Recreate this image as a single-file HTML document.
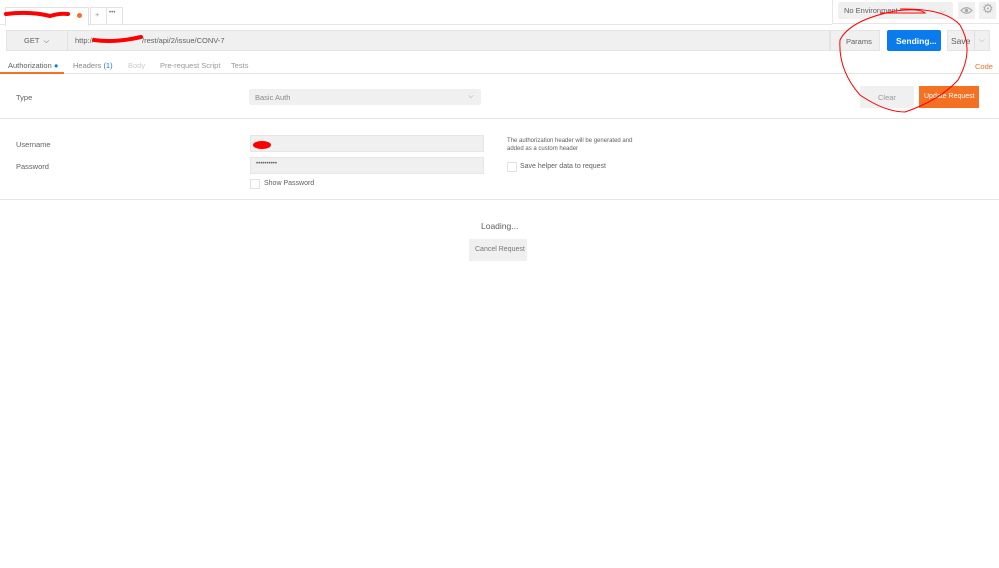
<!DOCTYPE html><html><head><style>
body{margin:0;width:999px;height:568px;background:#fff;font-family:"Liberation Sans",sans-serif;position:relative;overflow:hidden;color:#606060}
.a{position:absolute;white-space:nowrap}
.t{font-size:7.5px}
</style></head><body>
<div class="a" style="left:0;top:0;width:832px;height:24px;background:#fff;border-bottom:1px solid #e6e6e6"></div>
<div class="a" style="left:5px;top:7px;width:82px;height:18px;border:1px solid #e2e2e2;border-bottom:none;background:#fff"></div>
<div class="a" style="left:77px;top:13px;width:5px;height:5px;border-radius:50%;background:#f47023"></div>
<div class="a" style="left:90px;top:7px;width:31px;height:17px;border:1px solid #e2e2e2;border-bottom:none"></div>
<div class="a" style="left:106px;top:7px;width:1px;height:17px;background:#e2e2e2"></div>
<div class="a t" style="left:95px;top:10px;color:#999">+</div>
<div class="a" style="left:109px;top:10px;color:#777;font-size:6px">•••</div>
<div class="a" style="left:832px;top:0;width:1px;height:24px;background:#e6e6e6"></div>
<div class="a" style="left:833px;top:23px;width:166px;height:1px;background:#e6e6e6"></div>
<div class="a" style="left:838px;top:2px;width:115px;height:17px;background:#f0f0f0;border-radius:2px"></div>
<div class="a t" style="left:844px;top:6px">No Environment</div>
<div class="a t" style="left:940px;top:6px;color:#aaa">⌵</div>
<div class="a" style="left:958px;top:2px;width:17px;height:17px;background:#f0f0f0"></div>
<div class="a" style="left:979px;top:2px;width:17px;height:17px;background:#f0f0f0"></div>
<svg class="a" style="left:959px;top:5px" width="15" height="11"><path d="M2 5.5 Q7.5 0 13 5.5 Q7.5 11 2 5.5Z" fill="none" stroke="#aaa" stroke-width="1.2"/><circle cx="7.5" cy="5.5" r="1.8" fill="#aaa"/></svg>
<div class="a" style="left:982px;top:1px;color:#aaa;font-size:13px">⚙</div>
<div class="a" style="left:6px;top:30px;width:824px;height:21px;background:#f0f0f0;border:1px solid #e4e4e4;box-sizing:border-box"></div>
<div class="a" style="left:67px;top:30px;width:1px;height:21px;background:#e0e0e0"></div>
<div class="a t" style="left:24px;top:36px">GET &nbsp;⌵</div>
<div class="a t" style="left:75px;top:36px">http://</div>
<div class="a t" style="left:142px;top:36px">/rest/api/2/issue/CONV-7</div>
<div class="a" style="left:830px;top:30px;width:50px;height:21px;background:#f0f0f0;border:1px solid #e4e4e4;box-sizing:border-box"></div>
<div class="a t" style="left:846px;top:37px">Params</div>
<div class="a" style="left:887px;top:30px;width:54px;height:21px;background:#097bed;border-radius:2px"></div>
<div class="a" style="left:896px;top:36px;font-size:8.5px;color:#fff;font-weight:bold">Sending...</div>
<div class="a" style="left:947px;top:30px;width:43px;height:21px;background:#f0f0f0;border:1px solid #e4e4e4;box-sizing:border-box"></div>
<div class="a" style="left:974px;top:30px;width:1px;height:21px;background:#e0e0e0"></div>
<div class="a" style="left:951px;top:36px;font-size:8.5px">Save</div>
<div class="a t" style="left:979px;top:35px;color:#aaa">⌵</div>
<div class="a t" style="left:8px;top:61px">Authorization <span style="color:#097bed">●</span></div>
<div class="a t" style="left:73px;top:61px;color:#888">Headers <span style="color:#097bed">(1)</span></div>
<div class="a t" style="left:128px;top:61px;color:#ccc">Body</div>
<div class="a t" style="left:160px;top:61px;color:#999">Pre-request Script</div>
<div class="a t" style="left:231px;top:61px;color:#999">Tests</div>
<div class="a t" style="left:975px;top:62px;color:#f47023">Code</div>
<div class="a" style="left:0;top:73px;width:999px;height:1px;background:#e6e6e6"></div>
<div class="a" style="left:0;top:72px;width:64px;height:2px;background:#f47023"></div>
<div class="a t" style="left:16px;top:93px">Type</div>
<div class="a" style="left:249px;top:89px;width:232px;height:16px;background:#f0f0f0;border-radius:2px"></div>
<div class="a t" style="left:255px;top:93px;color:#888">Basic Auth</div>
<div class="a t" style="left:468px;top:91px;color:#999">⌵</div>
<div class="a" style="left:860px;top:86px;width:54px;height:22px;background:#f0f0f0"></div>
<div class="a t" style="left:878px;top:93px;color:#999">Clear</div>
<div class="a" style="left:919px;top:86px;width:60px;height:22px;background:#f47023"></div>
<div class="a" style="left:924px;top:93px;color:#fff;font-size:7px">Update Request</div>
<div class="a" style="left:0;top:118px;width:999px;height:1px;background:#e6e6e6"></div>
<div class="a t" style="left:16px;top:140px">Username</div>
<div class="a" style="left:250px;top:135px;width:234px;height:17px;background:#f0f0f0;border:1px solid #e6e6e6;box-sizing:border-box"></div>
<div class="a t" style="left:16px;top:162px">Password</div>
<div class="a" style="left:250px;top:157px;width:234px;height:17px;background:#f0f0f0;border:1px solid #e6e6e6;box-sizing:border-box"></div>
<div class="a" style="left:256px;top:161px;font-size:6px">••••••••••</div>
<div class="a" style="left:250px;top:179px;width:8px;height:8px;border:1px solid #e2e2e2"></div>
<div class="a" style="left:264px;top:180px;font-size:7px">Show Password</div>
<div class="a" style="left:507px;top:137px;font-size:6px;line-height:8px">The authorization header will be generated and<br>added as a custom header</div>
<div class="a" style="left:507px;top:162px;width:8px;height:8px;border:1px solid #e2e2e2"></div>
<div class="a" style="left:520px;top:163px;font-size:7px">Save helper data to request</div>
<div class="a" style="left:0;top:199px;width:999px;height:1px;background:#e6e6e6"></div>
<div class="a" style="left:481px;top:221px;font-size:8.5px">Loading...</div>
<div class="a" style="left:469px;top:239px;width:58px;height:22px;background:#f0f0f0"></div>
<div class="a" style="left:475px;top:246px;color:#777;font-size:7px">Cancel Request</div>
<svg class="a" style="left:0;top:0" width="999" height="568">
<path d="M6 14 Q30 11 50 16 Q60 13 68 14" stroke="#f00" stroke-width="4" fill="none" stroke-linecap="round"/>
<path d="M94 40 Q115 43 141 37" stroke="#f00" stroke-width="4" fill="none" stroke-linecap="round"/>
<ellipse cx="262" cy="145" rx="9" ry="4" fill="#f00"/>
<path d="M880 13 L925 13 Q920 8 895 11 Q850 20 840 40 Q838 70 860 95 Q885 112 905 112 Q940 100 958 80 Q975 50 960 25 Q945 8 900 9" stroke="#f00" stroke-width="1" fill="none"/>
</svg>
</body></html>
